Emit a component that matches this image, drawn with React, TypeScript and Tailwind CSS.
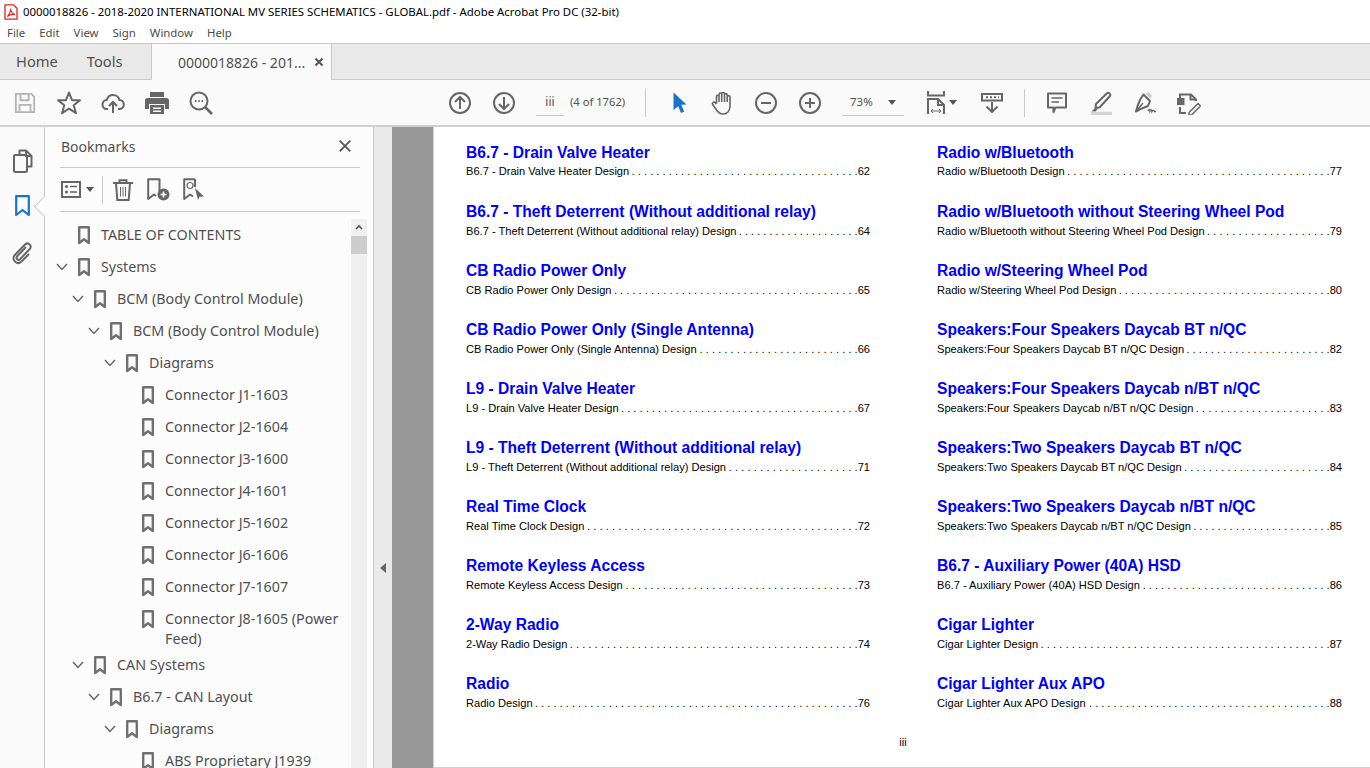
import React from "react";

const G = "#666666";
const ui = "font-['Noto_Sans','Open_Sans',sans-serif]";

type IP = { children: React.ReactNode; w?: number; h?: number; vb?: string; className?: string };
const Ic = ({ children, w = 24, h = 24, vb, className }: IP) => (
  <svg width={w} height={h} viewBox={vb ?? `0 0 ${w} ${h}`} fill="none" stroke={G} strokeWidth={2} className={className}>
    {children}
  </svg>
);

const Btn = ({ children, className = "w-[44px]" }: { children: React.ReactNode; className?: string }) => (
  <div className={`${className} h-full flex items-center justify-center shrink-0`}>{children}</div>
);

const Circle = ({ children }: { children: React.ReactNode }) => (
  <Ic>
    <circle cx="12" cy="12" r="10" />
    {children}
  </Ic>
);

const BookmarkIcon = ({ color = "#707070" }: { color?: string }) => (
  <svg width="12" height="19" viewBox="0 0 12 19" fill="none" stroke={color} strokeWidth="2.4">
    <path d="M1.2 1.2H10.8V17L6 13.2L1.2 17Z" strokeLinejoin="round" />
  </svg>
);

const Chevron = () => (
  <svg width="12" height="8" viewBox="0 0 12 8" fill="none" stroke={G} strokeWidth="1.5">
    <path d="M1 1L6 6.5L11 1" />
  </svg>
);

const tree: { t: string; l: number; c?: boolean; two?: string }[] = [
  { t: "TABLE OF CONTENTS", l: 0 },
  { t: "Systems", l: 0, c: true },
  { t: "BCM (Body Control Module)", l: 1, c: true },
  { t: "BCM (Body Control Module)", l: 2, c: true },
  { t: "Diagrams", l: 3, c: true },
  { t: "Connector J1-1603", l: 4 },
  { t: "Connector J2-1604", l: 4 },
  { t: "Connector J3-1600", l: 4 },
  { t: "Connector J4-1601", l: 4 },
  { t: "Connector J5-1602", l: 4 },
  { t: "Connector J6-1606", l: 4 },
  { t: "Connector J7-1607", l: 4 },
  { t: "Connector J8-1605 (Power", two: "Feed)", l: 4 },
  { t: "CAN Systems", l: 1, c: true },
  { t: "B6.7 - CAN Layout", l: 2, c: true },
  { t: "Diagrams", l: 3, c: true },
  { t: "ABS Proprietary J1939", l: 4 },
];

const left = [
  ["B6.7 - Drain Valve Heater", "B6.7 - Drain Valve Heater Design", "62"],
  ["B6.7 - Theft Deterrent (Without additional relay)", "B6.7 - Theft Deterrent (Without additional relay) Design", "64"],
  ["CB Radio Power Only", "CB Radio Power Only Design", "65"],
  ["CB Radio Power Only (Single Antenna)", "CB Radio Power Only (Single Antenna) Design", "66"],
  ["L9 - Drain Valve Heater", "L9 - Drain Valve Heater Design", "67"],
  ["L9 - Theft Deterrent (Without additional relay)", "L9 - Theft Deterrent (Without additional relay) Design", "71"],
  ["Real Time Clock", "Real Time Clock Design", "72"],
  ["Remote Keyless Access", "Remote Keyless Access Design", "73"],
  ["2-Way Radio", "2-Way Radio Design", "74"],
  ["Radio", "Radio Design", "76"],
];
const right = [
  ["Radio w/Bluetooth", "Radio w/Bluetooth Design", "77"],
  ["Radio w/Bluetooth without Steering Wheel Pod", "Radio w/Bluetooth without Steering Wheel Pod Design", "79"],
  ["Radio w/Steering Wheel Pod", "Radio w/Steering Wheel Pod Design", "80"],
  ["Speakers:Four Speakers Daycab BT n/QC", "Speakers:Four Speakers Daycab BT n/QC Design", "82"],
  ["Speakers:Four Speakers Daycab n/BT n/QC", "Speakers:Four Speakers Daycab n/BT n/QC Design", "83"],
  ["Speakers:Two Speakers Daycab BT n/QC", "Speakers:Two Speakers Daycab BT n/QC Design", "84"],
  ["Speakers:Two Speakers Daycab n/BT n/QC", "Speakers:Two Speakers Daycab n/BT n/QC Design", "85"],
  ["B6.7 - Auxiliary Power (40A) HSD", "B6.7 - Auxiliary Power (40A) HSD Design", "86"],
  ["Cigar Lighter", "Cigar Lighter Design", "87"],
  ["Cigar Lighter Aux APO", "Cigar Lighter Aux APO Design", "88"],
];

const ctx = document.createElement("canvas").getContext("2d");
const PITCH = 6.17;
// The number of leader dots, and the spacing that makes them fill the row exactly.
const leader = (text: string, width: number) => {
  if (!ctx) return { dots: "", spacing: 0 };
  ctx.font = "11.1px 'Liberation Sans'";
  const room = width - ctx.measureText(text).width - 12.4 - 2;
  const n = Math.max(1, Math.round((room + 3) / PITCH));
  return { dots: Array(n).fill(".").join(" "), spacing: (room + 3 - n * PITCH) / n };
};

const Entry = ({ e, first, width }: { e: string[]; first: boolean; width: number }) => {
  const { dots, spacing } = leader(e[1], width);
  return (
    <div className="h-[59px] flex flex-col">
      <div className="h-[20px] leading-[20px] text-[15.6px] font-bold text-[#0000ff] whitespace-nowrap">{e[0]}</div>
      <div className={`h-[18px] leading-[18px] text-[11.1px] text-black flex justify-between whitespace-pre ${first ? "-mt-[1px]" : ""}`}>
        <span>{e[1]}</span>
        <span className="flex-1 text-right" style={{ wordSpacing: spacing }}>
          {dots}
        </span>
        <span>{e[2]}</span>
      </div>
    </div>
  );
};

const Caret = ({ className }: { className: string }) => (
  <svg width="8" height="5" className={className} viewBox="0 0 8 5" fill="#555">
    <path d="M0 0H8L4 5Z" />
  </svg>
);

export default function App() {
  return (
    <div className={`w-[1370px] h-[768px] overflow-hidden flex flex-col bg-white ${ui}`}>
      {/* title bar */}
      <div className="h-[23px] shrink-0 flex items-center pl-[4px] bg-white">
        <svg width="14" height="16" viewBox="0 0 14 16" fill="none" className="shrink-0">
          <path d="M1 .8H9.5L13 4.3V15.2H1Z" fill="#fff" stroke="#e0201b" strokeWidth="1.3" />
          <path d="M3.2 12.5C5 11 6.8 7 6.8 4.5C6.8 7.2 8.5 10 11 10.5C8.5 10.2 5 11 3.2 12.5Z" stroke="#e0201b" strokeWidth="1.1" />
        </svg>
        <span className="ml-[5px] text-[11.4px] text-black whitespace-nowrap">
          0000018826 - 2018-2020 INTERNATIONAL MV SERIES SCHEMATICS - GLOBAL.pdf - Adobe Acrobat Pro DC (32-bit)
        </span>
      </div>
      {/* menu */}
      <div className="h-[20px] shrink-0 flex items-center pl-[7px] gap-[14px] text-[11.4px] text-[#4b4b4b] bg-white">
        <span>File</span>
        <span>Edit</span>
        <span>View</span>
        <span>Sign</span>
        <span>Window</span>
        <span>Help</span>
      </div>
      {/* tabs */}
      <div className="h-[37px] shrink-0 flex bg-[#e9e9e9] border-t border-b border-[#c9c9c9] text-[#505050]">
        <div className="w-[151px] flex items-center text-[14.7px]">
          <span className="ml-[16px]">Home</span>
          <span className="ml-[29px]">Tools</span>
        </div>
        <div className="w-[181px] h-[36px] bg-[#fafafa] border-l border-r border-[#c9c9c9] flex items-center text-[14px] relative z-10">
          <span className="ml-[26px] whitespace-nowrap">0000018826 - 201...</span>
          <svg width="10" height="10" viewBox="0 0 10 10" className="ml-[9px]" stroke="#555" strokeWidth="2">
            <path d="M1.5 1.5L8.5 8.5M8.5 1.5L1.5 8.5" />
          </svg>
        </div>
      </div>
      {/* toolbar */}
      <div className="h-[47px] shrink-0 flex items-center pl-[3px] bg-[#fafafa] border-b-2 border-[#d0d0d0] text-[#505050]">
        <Btn>
          <Ic vb="0 0 24 24" w={22} h={22}>
            <g stroke="#b5b5b5">
              <path d="M2 2H19L22 5V22H2Z" />
              <path d="M7 2V9H16V2M6 22V14H18V22" />
            </g>
          </Ic>
        </Btn>
        <Btn>
          <Ic w={26} h={26}>
            <path d="M13 2.5L16 10.2H24L17.7 15.2L20 23.2L13 18.6L6 23.2L8.3 15.2L2 10.2H10Z" strokeLinejoin="round" />
          </Ic>
        </Btn>
        <Btn>
          <Ic>
            <path d="M7 18H6C3 18 1.5 15.5 1.5 13.5C1.5 11 3.5 9 5.8 9C6.6 5.8 9 4 12 4C15.5 4 18 6.5 18.4 9C21 9 22.8 11 22.8 13.5C22.8 16 21 18 18 18H17" />
            <path d="M12 22V11M8 15L12 11L16 15" />
          </Ic>
        </Btn>
        <Btn>
          <svg width="24" height="22" viewBox="0 0 24 22" fill={G}>
            <path d="M5 0H19V5H5Z" />
            <path fillRule="evenodd" d="M3 6H21A2.5 2.5 0 0 1 24 8.5V17H20V12H4V17H0V8.5A2.5 2.5 0 0 1 3 6Z" />
            <path fillRule="evenodd" d="M5 13H19V22H5ZM8 15.5V17H16V15.5ZM8 18.5V20H16V18.5Z" />
          </svg>
        </Btn>
        <Btn>
          <Ic>
            <circle cx="10" cy="10" r="8.5" />
            <path d="M16 16L23 23" strokeWidth="2.6" />
            <path d="M6 10H7.5M9.3 10H10.8M12.6 10H14.1" />
          </Ic>
        </Btn>
        <div className="w-[215px] shrink-0" />
        <Btn>
          <Circle>
            <path d="M12 18V6.5M7 11L12 6L17 11" />
          </Circle>
        </Btn>
        <Btn>
          <Circle>
            <path d="M12 6V17.5M7 13L12 18L17 13" />
          </Circle>
        </Btn>
        <div className="ml-[10px] w-[28px] h-[26px] border-b border-[#c9c9c9] flex items-center justify-center text-[12px] shrink-0">iii</div>
        <span className="ml-[6px] w-[56px] text-[11.2px] whitespace-nowrap">(4 of 1762)</span>
        <div className="ml-[19px] w-px h-[28px] bg-[#c9c9c9] shrink-0" />
        <Btn className="w-[44px] ml-[12px]">
          <svg width="16" height="22" viewBox="0 0 16 22" fill="#1b73cc">
            <path d="M1.5 0.5L14.5 12.5L9.3 12.8L12.2 19.5L9 21L6.2 14.2L1.5 18Z" />
          </svg>
        </Btn>
        <Btn className="w-[42px]">
          <Ic>
            <path
              d="M5.5 12.5V5.5C5.5 3.8 8 3.8 8 5.5V3.5C8 1.5 10.7 1.5 10.7 3.5V3C10.7 1 13.5 1 13.5 3V4C13.5 2.2 16.2 2.2 16.2 4V5.8C16.2 4.2 19 4.2 19 5.8V15C19 19.5 16.5 23 12 23C8.5 23 7 21 5.5 19L1.7 13.5C0.8 11.8 3.2 10.2 4.5 11.8L5.5 13M8 5V11M10.7 3V11M13.5 3V11M16.2 5V11"
              strokeWidth="1.6"
              strokeLinejoin="round"
            />
          </Ic>
        </Btn>
        <Btn>
          <Circle>
            <path d="M7 12H17" />
          </Circle>
        </Btn>
        <Btn>
          <Circle>
            <path d="M7 12H17M12 7V17" />
          </Circle>
        </Btn>
        <div className="ml-[10px] w-[62px] h-[26px] border-b border-[#c9c9c9] flex items-center shrink-0 text-[11.5px]">
          <span className="ml-[8px]">73%</span>
          <Caret className="ml-[15px]" />
        </div>
        <Btn className="w-[44px] ml-[10px]">
          <svg width="18" height="24" viewBox="0 0 18 24" fill="none" stroke={G} strokeWidth="2">
            <path d="M1 0V4.5H17V0" />
            <path d="M1 23V8H11L17 14V23" />
            <path d="M11 8V14H17" />
            <path d="M4 20H14M4 20L6 18M4 20L6 22M14 20L12 18M14 20L12 22" strokeWidth="1" />
          </svg>
        </Btn>
        <Caret className="ml-[-9px]" />
        <Btn className="w-[44px] ml-[13px]">
          <svg width="22" height="20" viewBox="0 0 22 20" fill="none" stroke={G} strokeWidth="2">
            <path d="M1 1H21V7.5H1Z" />
            <path d="M5 4.2H7M9 4.2H11M13 4.2H15M17 4.2H18" strokeWidth="2" />
            <path d="M11 9V19M5.5 13.5L11 19L16.5 13.5" />
          </svg>
        </Btn>
        <div className="ml-[10px] w-px h-[28px] bg-[#c9c9c9] shrink-0" />
        <Btn className="w-[44px] ml-[10px]">
          <svg width="20" height="22" viewBox="0 0 20 22" fill="none" stroke={G} strokeWidth="2">
            <path d="M1 1.5H19V15.5H8.5L6.5 20V15.5H1Z" strokeLinejoin="round" />
            <path d="M4.5 6H15.5M4.5 10H12" strokeWidth="1.4" />
          </svg>
        </Btn>
        <Btn>
          <svg width="24" height="24" viewBox="0 0 24 24" fill="none" stroke={G} strokeWidth="2">
            <path d="M7 13L18 2.2C19.5 1 22 3 21 5L10.5 16.5L6.5 17L7 13Z" strokeLinejoin="round" />
            <path d="M6 17L2.5 20.5H6.5L8.5 18.5" fill={G} stroke="none" />
            <path d="M2 22.5H23" stroke="#d5d5d5" strokeWidth="3.5" />
          </svg>
        </Btn>
        <Btn>
          <svg width="24" height="24" viewBox="0 0 24 24" fill="none" stroke={G} strokeWidth="2">
            <path d="M14 2L18 6" stroke="#c9c9c9" strokeWidth="3" />
            <path d="M10.5 3.5L17 10L15 15C11 16.5 7 18 3 20.5C4 16 5.5 12 7.5 8Z" strokeLinejoin="round" />
            <path d="M3 20.5L10 12" strokeWidth="1.4" />
            <path d="M15 20C16 18 17 18 17 20C18 18.5 19 18.5 19 20.5C20 19 21 19 21.5 20.5H23" strokeWidth="1.4" />
          </svg>
        </Btn>
        <Btn>
          <svg width="24" height="24" viewBox="0 0 24 24" fill="none" stroke={G} strokeWidth="2">
            <path d="M3 9V3.5H14L19 8.5V10" />
            <path d="M13.5 3.5V8.5H19" />
            <path d="M3 16V22H9" />
            <path d="M0.5 8H6.5V13H0.5Z" fill={G} />
            <path d="M12 21.5L21 12.5L23.5 15L14.5 24H12Z" strokeWidth="1.5" strokeLinejoin="round" />
          </svg>
        </Btn>
      </div>
      {/* main */}
      <div className="flex-1 min-h-0 flex">
        {/* rail */}
        <div className="w-[45px] shrink-0 bg-[#fafafa] border-r border-[#c9c9c9] relative flex flex-col items-center pt-[22px] gap-[23px]">
          <svg width="20" height="24" viewBox="0 0 20 24" fill="none" stroke={G} strokeWidth="2" className="ml-[2px]">
            <path d="M6.5 5V1.5H13L18.5 7V17.5H14.5" strokeLinejoin="round" />
            <path d="M13 1.5V7H18.5" />
            <rect x="1" y="6" width="13" height="17" rx="1.5" />
          </svg>
          <svg width="15" height="22" viewBox="0 0 15 22" fill="none" stroke="#1b73cc" strokeWidth="2.2" className="-mt-[1px]">
            <path d="M1.2 1.2H13.8V20L7.5 15L1.2 20Z" strokeLinejoin="round" />
          </svg>
          <svg width="22" height="24" viewBox="0 0 22 24" fill="none" stroke={G} strokeWidth="2" className="mt-[1px]">
            <path d="M15 6L6 15.5C4.5 17.5 7 20 9 18.2L18.5 8.2C21.5 5 17.5 0.5 14 3.5L3.8 14C0 18 5.5 25 10.5 20.5L18 13" />
          </svg>
          <div className="absolute left-[37px] top-[72px] w-[15px] h-[15px] rotate-45 bg-white border-l border-b border-[#c9c9c9]" />
        </div>
        {/* bookmarks */}
        <div className="w-[328px] shrink-0 bg-[#fcfcfc] flex flex-col relative z-10 text-[#505050] overflow-hidden">
          <div className="h-[41px] shrink-0 ml-[15px] mr-[13px] pb-[2px] border-b border-[#c9c9c9] flex items-center justify-between pl-[1px] pr-[9px]">
            <span className="text-[14px]">Bookmarks</span>
            <svg width="12" height="12" viewBox="0 0 12 12" stroke="#555" strokeWidth="1.8">
              <path d="M0.7 0.7L11.3 11.3M11.3 0.7L0.7 11.3" />
            </svg>
          </div>
          <div className="h-[44px] shrink-0 ml-[15px] mr-[13px] border-b border-[#c9c9c9] flex items-center">
            <svg width="20" height="17" viewBox="0 0 20 17" fill="none" stroke={G} strokeWidth="2" className="ml-[1px]">
              <path d="M1 1H19V16H1Z" />
              <circle cx="5.5" cy="5.5" r="1.6" fill={G} stroke="none" />
              <circle cx="5.5" cy="11" r="1.6" fill={G} stroke="none" />
              <path d="M9 5.5H16M9 11H16" strokeWidth="1.5" />
            </svg>
            <Caret className="ml-[5px]" />
            <div className="ml-[8px] w-px h-[28px] bg-[#c9c9c9]" />
            <svg width="20" height="22" viewBox="0 0 20 22" fill="none" stroke={G} strokeWidth="2" className="ml-[10px]">
              <path d="M0 4H20M6.5 4V1.2H13.5V4M3 4L4.3 21H15.7L17 4" />
              <path d="M7.5 8V17.5M10 8V17.5M12.5 8V17.5" strokeWidth="1" />
            </svg>
            <svg width="23" height="23" viewBox="0 0 23 23" fill="none" stroke={G} strokeWidth="2" className="ml-[14px]">
              <path d="M12.5 13.5V1.2H1.2V21L7 16.5L9 18" strokeLinejoin="round" />
              <circle cx="16.5" cy="16.5" r="6" fill={G} stroke="none" />
              <path d="M13.5 16.5H19.5M16.5 13.5V19.5" stroke="#fff" strokeWidth="1.7" />
            </svg>
            <svg width="22" height="23" viewBox="0 0 22 23" fill="none" stroke={G} strokeWidth="2" className="ml-[13px]">
              <path d="M12 1.2H1.2V21L7 16.5L10 18.5M12 1.2V9" strokeLinejoin="round" />
              <circle cx="7" cy="7.5" r="3" strokeWidth="1.2" />
              <path d="M12 10L21 18.5L16.5 18.7L15 22Z" fill={G} stroke="none" />
            </svg>
          </div>
          <div className="flex-1 min-h-0 flex pt-[7px]">
            <div className="flex-1 min-w-0 overflow-hidden">
              {tree.map((r, i) => (
                <div key={i} className="flex items-start" style={{ paddingLeft: 11 + r.l * 16 }}>
                  <div className="w-[12px] h-[32px] shrink-0 flex items-center">{r.c && <Chevron />}</div>
                  <div className="w-[12px] h-[32px] shrink-0 flex items-center ml-[10px]">
                    <BookmarkIcon />
                  </div>
                  <div className={`ml-[11px] text-[14.3px] leading-[20px] pt-[6px] whitespace-nowrap ${r.two ? "" : "pb-[6px]"}`}>
                    {r.t}
                    {r.two && <div>{r.two}</div>}
                  </div>
                </div>
              ))}
            </div>
            <div className="w-[16px] shrink-0 mr-[6px] bg-[#f0f0f0] flex flex-col items-center">
              <svg width="8" height="6" viewBox="0 0 8 6" fill="none" stroke="#555" strokeWidth="1.6" className="mt-[5px]">
                <path d="M1 5L4 2L7 5" />
              </svg>
              <div className="w-full h-[18px] bg-[#cdcdcd] mt-[6px]" />
            </div>
          </div>
        </div>
        {/* collapse strip */}
        <div className="w-[19px] shrink-0 bg-[#e9e9e9] border-l border-[#c9c9c9] pt-[436px] pl-[6px]">
          <svg width="6" height="10" viewBox="0 0 6 10" fill="#666">
            <path d="M6 0V10L0 5Z" />
          </svg>
        </div>
        {/* viewer */}
        <div className="flex-1 min-w-0 bg-[#999999] pl-[41px]">
          <div className="h-[641px] border-l border-b border-[#d0d0d0] bg-white pl-[32px] pt-[16px] font-['Liberation_Sans',Arial,sans-serif] flex flex-col">
            <div className="flex">
              <div className="w-[404px] shrink-0">
                {left.map((e, i) => (
                  <Entry key={e[0]} e={e} first={i === 0} width={404} />
                ))}
              </div>
              <div className="w-[405px] shrink-0 ml-[67px]">
                {right.map((e, i) => (
                  <Entry key={e[0]} e={e} first={i === 0} width={405} />
                ))}
              </div>
            </div>
            <div className="w-[874px] text-center text-[11px] text-black leading-[14px] mt-[2px]">iii</div>
          </div>
        </div>
      </div>
    </div>
  );
}
